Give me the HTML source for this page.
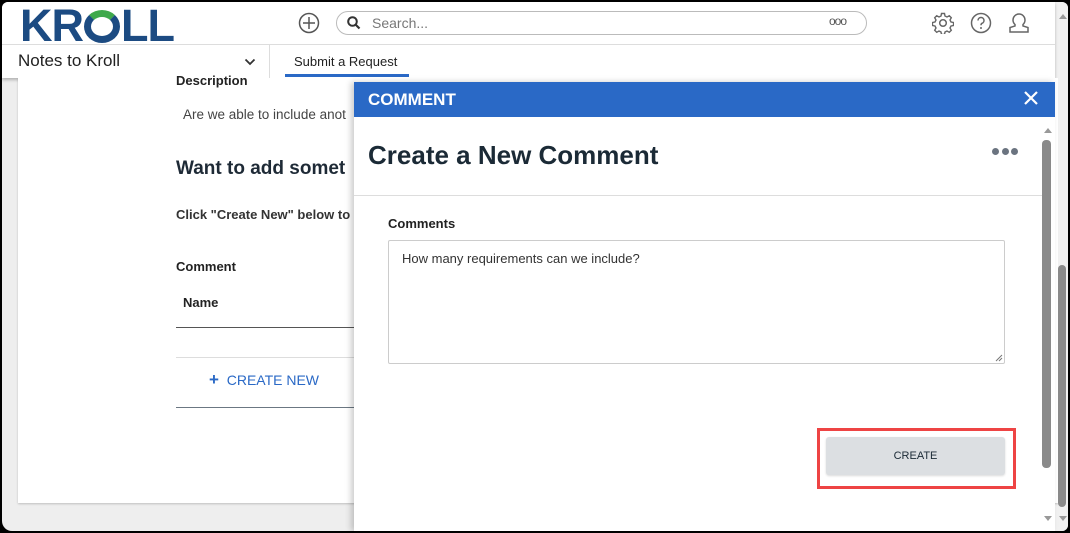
<!DOCTYPE html>
<html><head><style>
*{box-sizing:border-box;margin:0;padding:0}
body{width:1070px;height:533px;overflow:hidden;background:#000;font-family:"Liberation Sans",sans-serif;position:relative}
#frame{position:absolute;left:2px;top:2px;width:1066px;height:529px;background:#eeeeee;border-radius:6px 6px 6px 10px;overflow:hidden}
.abs{position:absolute}
</style></head><body>
<div id="frame">
  <div class="abs" style="left:1053px;top:0;width:13px;height:529px;background:#f1f1f1"></div>
  <div class="abs" style="left:1057px;top:12px;width:0;height:0;border-left:4px solid transparent;border-right:4px solid transparent;border-bottom:5px solid #999"></div>
  <div class="abs" style="left:1056px;top:263px;width:8px;height:242px;background:#8a8a8a;border-radius:4px"></div>
  <div class="abs" style="left:1057px;top:514px;border-left:4px solid transparent;border-right:4px solid transparent;border-top:5px solid #999"></div>
  <div class="abs" style="left:0;top:0;width:1053px;height:76px;background:#fff;box-shadow:0 2px 3px rgba(0,0,0,.25)"></div>
  <div class="abs" style="left:0;top:42px;width:1053px;height:1px;background:#ddd"></div>
  <div class="abs" style="left:18px;top:-2px;font-size:45px;font-weight:bold;color:#1c4b82;letter-spacing:-1px;font-family:'Liberation Sans',sans-serif">KR<span style="display:inline-block;width:36px;height:33px;border-radius:50%;border:7px solid #1c4b82;border-top-color:#3fa94b;vertical-align:-2px;margin:0 1px"></span>LL</div>
  <svg class="abs" style="left:296px;top:10px" width="22" height="22" viewBox="0 0 22 22"><circle cx="11" cy="11" r="9.5" fill="none" stroke="#555" stroke-width="1.5"/><path d="M11 5v12M5 11h12" stroke="#555" stroke-width="1.5"/></svg>
  <div class="abs" style="left:334px;top:9px;width:531px;height:24px;border:1px solid #bbb;border-radius:12px"></div>
  <svg class="abs" style="left:345px;top:14px" width="14" height="14" viewBox="0 0 14 14"><circle cx="5.5" cy="5.5" r="4.3" fill="none" stroke="#333" stroke-width="2"/><path d="M8.5 8.5l4 4" stroke="#333" stroke-width="2.2"/></svg>
  <div class="abs" style="left:370px;top:13px;font-size:14px;color:#777">Search...</div>
  <div class="abs" style="left:827px;top:12px;font-size:12px;color:#555;letter-spacing:-1px">ooo</div>
  <svg class="abs" style="left:930px;top:10px" width="22" height="22" viewBox="0 0 22 22"><circle cx="11" cy="11" r="3.3" fill="none" stroke="#666" stroke-width="1.5"/><path d="M9.5 1.5h3l.5 2.5 2 1 2.3-1.3 2 2-1.3 2.3 1 2 2.5.5v3l-2.5.5-1 2 1.3 2.3-2 2-2.3-1.3-2 1-.5 2.5h-3l-.5-2.5-2-1-2.3 1.3-2-2 1.3-2.3-1-2-2.5-.5v-3l2.5-.5 1-2-1.3-2.3 2-2 2.3 1.3 2-1z" fill="none" stroke="#666" stroke-width="1.4"/></svg>
  <svg class="abs" style="left:968px;top:10px" width="22" height="22" viewBox="0 0 22 22"><circle cx="11" cy="11" r="9.5" fill="none" stroke="#666" stroke-width="1.5"/><path d="M8 8.5a3 3 0 1 1 4 2.8c-.8.4-1 1-1 2" fill="none" stroke="#666" stroke-width="1.5"/><circle cx="11" cy="16" r="1" fill="#666"/></svg>
  <svg class="abs" style="left:1006px;top:10px" width="22" height="22" viewBox="0 0 22 22"><path d="M7 12.5a6 6 0 1 1 8 0v1.5l5 1.5v4.5h-18v-4.5l5-1.5z" fill="none" stroke="#666" stroke-width="1.5"/></svg>
  <div class="abs" style="left:16px;top:49px;font-size:17px;color:#222">Notes to Kroll</div>
  <svg class="abs" style="left:242px;top:56px" width="12" height="8" viewBox="0 0 12 8"><path d="M1.5 1.5l4.5 4.5 4.5-4.5" fill="none" stroke="#333" stroke-width="1.8"/></svg>
  <div class="abs" style="left:267px;top:42px;width:1px;height:34px;background:#ddd"></div>
  <div class="abs" style="left:292px;top:52px;font-size:13px;color:#222">Submit a Request</div>
  <div class="abs" style="left:283px;top:72px;width:124px;height:3px;background:#2a69c6"></div>
  <div class="abs" style="left:16px;top:76px;width:1040px;height:425px;background:#fff;box-shadow:0 1px 2px rgba(0,0,0,.2);clip-path:inset(0 0 -3px -3px)"></div>
  <div class="abs" style="left:174px;top:71px;font-size:13px;font-weight:bold;color:#222">Description</div>
  <div class="abs" style="left:181px;top:105px;font-size:13.5px;color:#444">Are we able to include anot</div>
  <div class="abs" style="left:174px;top:156px;font-size:19px;font-weight:bold;color:#1e2a36">Want to add somet</div>
  <div class="abs" style="left:174px;top:205px;font-size:13px;font-weight:bold;color:#333">Click "Create New" below to</div>
  <div class="abs" style="left:174px;top:257px;font-size:13px;font-weight:bold;color:#222">Comment</div>
  <div class="abs" style="left:181px;top:293px;font-size:13px;font-weight:bold;color:#222">Name</div>
  <div class="abs" style="left:174px;top:325px;width:180px;height:1px;background:#555"></div>
  <div class="abs" style="left:174px;top:355px;width:180px;height:1px;background:#ddd"></div>
  <div class="abs" style="left:207px;top:368px;font-size:14px;color:#2a69c6"><b style="font-size:17px">+</b>&nbsp; CREATE NEW</div>
  <div class="abs" style="left:174px;top:405px;width:180px;height:1px;background:#6b7782"></div>
  <div class="abs" style="left:352px;top:80px;width:701px;height:449px;background:#fff;box-shadow:-3px 0 6px rgba(0,0,0,.2)"></div>
  <div class="abs" style="left:352px;top:80px;width:701px;height:35px;background:#2a69c6"></div>
  <div class="abs" style="left:366px;top:88px;font-size:17px;font-weight:bold;color:#fff">COMMENT</div>
  <svg class="abs" style="left:1022px;top:89px" width="14" height="14" viewBox="0 0 14 14"><path d="M1 1l12 12M13 1L1 13" stroke="#fff" stroke-width="2.2"/></svg>
  <div class="abs" style="left:1042px;top:126px;border-left:4px solid transparent;border-right:4px solid transparent;border-bottom:5px solid #999"></div>
  <div class="abs" style="left:1040px;top:138px;width:9px;height:328px;background:#8a8a8a;border-radius:4px"></div>
  <div class="abs" style="left:1042px;top:514px;border-left:4px solid transparent;border-right:4px solid transparent;border-top:5px solid #999"></div>
  <div class="abs" style="left:366px;top:138px;font-size:26px;font-weight:bold;color:#1b2a36">Create a New Comment</div>
  <div class="abs" style="left:990px;top:146px;width:26px;height:8px;display:flex;justify-content:space-between"><i style="width:7px;height:7px;border-radius:50%;background:#6b7480"></i><i style="width:7px;height:7px;border-radius:50%;background:#6b7480"></i><i style="width:7px;height:7px;border-radius:50%;background:#6b7480"></i></div>
  <div class="abs" style="left:352px;top:193px;width:688px;height:1px;background:#ddd"></div>
  <div class="abs" style="left:386px;top:214px;font-size:13px;font-weight:bold;color:#222">Comments</div>
  <div class="abs" style="left:386px;top:238px;width:617px;height:124px;border:1px solid #ccc;border-radius:2px"></div>
  <div class="abs" style="left:400px;top:249px;font-size:13px;color:#333">How many requirements can we include?</div>
  <svg class="abs" style="left:993px;top:352px" width="8" height="8"><path d="M7 1L1 7M7 4L4 7" stroke="#777"/></svg>
  <div class="abs" style="left:815px;top:426px;width:199px;height:61px;border:3px solid #ee4444"></div>
  <div class="abs" style="left:824px;top:435px;width:179px;height:38px;background:#dcdfe2;border-radius:3px;box-shadow:0 1px 2px rgba(0,0,0,.15);font-size:11px;color:#1b2a36;text-align:center;line-height:38px">CREATE</div>
</div>
</body></html>
